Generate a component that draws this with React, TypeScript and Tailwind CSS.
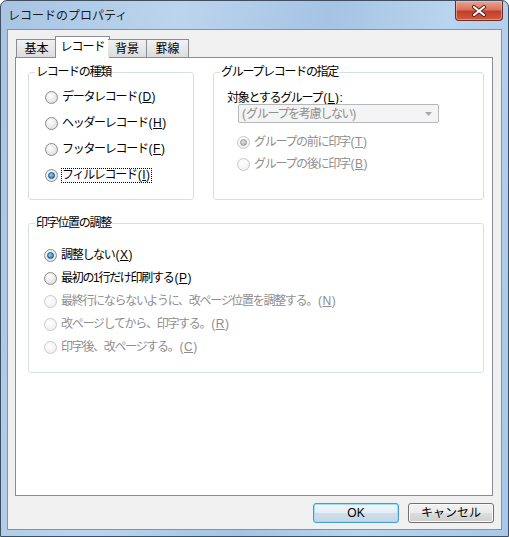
import React from "react";

function Radio({ checked = false, disabled = false }: { checked?: boolean; disabled?: boolean }) {
  return (
    <span
      className={
        disabled
          ? "flex h-[13px] w-[13px] shrink-0 items-center justify-center rounded-full border border-[#c9c9c9] bg-[radial-gradient(circle_at_40%_35%,#ffffff,#ececec)]"
          : "flex h-[13px] w-[13px] shrink-0 items-center justify-center rounded-full border border-[#8c8c8c] bg-[radial-gradient(circle_at_40%_35%,#ffffff,#d6d6d6)]"
      }
    >
      {checked &&
        (disabled ? (
          <span className="h-[7px] w-[7px] rounded-full border border-[#9a9a9a] bg-[radial-gradient(circle_at_40%_35%,#e0e0e0,#a8a8a8)]" />
        ) : (
          <span className="h-[7px] w-[7px] rounded-full border border-[#184f86] bg-[radial-gradient(circle_at_40%_35%,#8fd0fa,#1a6cb6)]" />
        ))}
    </span>
  );
}

// mnemonic "(X)" — latin part keeps normal spacing
function Mn({ k }: { k: string }) {
  return (
    <span className="pl-[1px] tracking-[0.5px]">
      (<u>{k}</u>)
    </span>
  );
}

function Option({
  label,
  mn,
  checked,
  disabled,
  focus,
}: {
  label: string;
  mn: string;
  checked?: boolean;
  disabled?: boolean;
  focus?: boolean;
}) {
  return (
    <div className="flex h-4 items-center gap-[3px]">
      <Radio checked={checked} disabled={disabled} />
      <span
        className={
          (disabled ? "text-[#8e8e8e] " : "text-black ") +
          (focus ? "border border-dotted border-black leading-[13px]" : "border border-transparent leading-[13px]")
        }
      >
        {label}
        <Mn k={mn} />
      </span>
    </div>
  );
}

function Group({ title, className, children }: { title: string; className: string; children: React.ReactNode }) {
  return (
    <div className={"relative rounded-[3px] border border-[#d5dfe5] " + className}>
      <span className="absolute -top-[8px] left-[6px] bg-white px-[1px] leading-[14px] text-black">{title}</span>
      {children}
    </div>
  );
}

export default function App() {
  return (
    <div className="flex h-[537px] w-[509px] flex-col overflow-hidden rounded-t-[7px] border border-[#3f4e60] bg-[linear-gradient(100deg,#a7c4e2_0%,#bcd5ee_30%,#a5c3e4_55%,#b9d4ee_75%,#a9c7e7_100%)] font-['Liberation_Sans','Noto_Sans_CJK_JP',sans-serif] text-[12px] tracking-[-1.3px]">
      {/* Title bar */}
      <div className="flex h-[28px] shrink-0 items-start justify-between">
        <span className="pl-[7px] pt-[6px] font-['Noto_Sans_CJK_JP',sans-serif] text-[12px] leading-[16px] tracking-[0px] text-[#1a1a1a]">
          レコードのプロパティ
        </span>
        <div className="mr-[5px] flex h-[20px] w-[48px] items-center justify-center rounded-b-[4px] border border-t-0 border-[#6b2b20] bg-[linear-gradient(#e9a594_0%,#d9735e_45%,#c2402a_55%,#cf5a3f_100%)] shadow-[inset_0_0_0_1px_rgba(255,200,190,0.5)]">
          <svg width="16" height="12" viewBox="0 0 16 12">
            <path d="M3 2 L13 10 M13 2 L3 10" stroke="#5a2218" strokeWidth="4" strokeLinecap="round" />
            <path d="M3 2 L13 10 M13 2 L3 10" stroke="#ffffff" strokeWidth="2.2" strokeLinecap="round" />
          </svg>
        </div>
      </div>

      {/* Client area */}
      <div className="mx-[6px] mb-[6px] flex flex-1 flex-col border border-[#7f95ad] bg-[#f0f0f0] pl-[7px] pt-[6px]">
        {/* Tabs */}
        <div className="relative z-10 flex items-end pl-[1px] tracking-[0px]">
          <div className="flex h-[18px] w-[41px] items-center justify-center border border-b-0 border-[#898c95] bg-[linear-gradient(#f2f2f2,#dcdcdc)]">
            基本
          </div>
          <div className="-mx-[2px] -mb-[1px] flex h-[22px] w-[55px] items-center justify-center border border-b-0 border-[#898c95] bg-white pb-[2px] tracking-[-1px]">
            レコード
          </div>
          <div className="flex h-[18px] w-[39px] items-center justify-center border border-b-0 border-l-0 border-[#898c95] bg-[linear-gradient(#f2f2f2,#dcdcdc)]">
            背景
          </div>
          <div className="flex h-[18px] w-[42px] items-center justify-center border border-b-0 border-l-0 border-[#898c95] bg-[linear-gradient(#f2f2f2,#dcdcdc)]">
            罫線
          </div>
        </div>

        {/* Tab panel */}
        <div className="flex h-[439px] w-[478px] flex-col border border-[#898c95] bg-white pl-[12px] pt-[14px]">
          <div className="flex gap-[19px]">
            <Group title="レコードの種類" className="h-[128px] w-[166px]">
              <div className="flex flex-col gap-[10px] pl-[16px] pt-[16px]">
                <Option label="データレコード" mn="D" />
                <Option label="ヘッダーレコード" mn="H" />
                <Option label="フッターレコード" mn="F" />
                <Option label="フィルレコード" mn="I" checked focus />
              </div>
            </Group>
            <Group title="グループレコードの指定" className="h-[128px] w-[271px]">
              <div className="flex flex-col pl-[13px] pt-[18px]">
                <span className="leading-[14px]">
                  対象とするグループ
                  <Mn k="L" />:
                </span>
                <div className="-mt-[1px] ml-[11px] flex h-[19px] w-[201px] items-center justify-between rounded-[2px] border border-[#b4b8bc] bg-[#f4f4f4] pl-[3px] pr-[6px] text-[#8e8e8e]">
                  <span className="leading-[14px]">
                    <span className="tracking-[0px]">(</span>グループを考慮しない<span className="tracking-[0px]">)</span>
                  </span>
                  <svg width="7" height="4" viewBox="0 0 7 4">
                    <path d="M0 0 L7 0 L3.5 4 Z" fill="#a8a8a8" />
                  </svg>
                </div>
                <div className="ml-[10px] mt-[11px] flex flex-col gap-[6px]">
                  <Option label="グループの前に印字" mn="T" checked disabled />
                  <Option label="グループの後に印字" mn="B" disabled />
                </div>
              </div>
            </Group>
          </div>

          <Group title="印字位置の調整" className="mt-[23px] h-[150px] w-[456px]">
            <div className="flex flex-col gap-[7px] pl-[15px] pt-[23px]">
              <Option label="調整しない" mn="X" checked />
              <Option label="最初の1行だけ印刷する" mn="P" />
              <Option label="最終行にならないように、改ページ位置を調整する。" mn="N" disabled />
              <Option label="改ページしてから、印字する。" mn="R" disabled />
              <Option label="印字後、改ページする。" mn="C" disabled />
            </div>
          </Group>
        </div>

        {/* Buttons */}
        <div className="mt-[7px] flex justify-end gap-[9px] pr-[7px] tracking-[0px]">
          <button className="flex h-[20px] w-[86px] items-center justify-center rounded-[3px] border border-[#3c9fdc] bg-[linear-gradient(#f2f7fb_0%,#e3edf5_50%,#cfdee9_51%,#c5d7e5_100%)] text-black shadow-[inset_0_0_0_1px_#9fdcfb]">
            OK
          </button>
          <button className="flex h-[20px] w-[86px] items-center justify-center rounded-[3px] border border-[#707070] bg-[linear-gradient(#f2f2f2_0%,#ebebeb_50%,#dddddd_51%,#cfcfcf_100%)] text-black shadow-[inset_0_0_0_1px_#fbfbfb]">
            キャンセル
          </button>
        </div>
      </div>
    </div>
  );
}
